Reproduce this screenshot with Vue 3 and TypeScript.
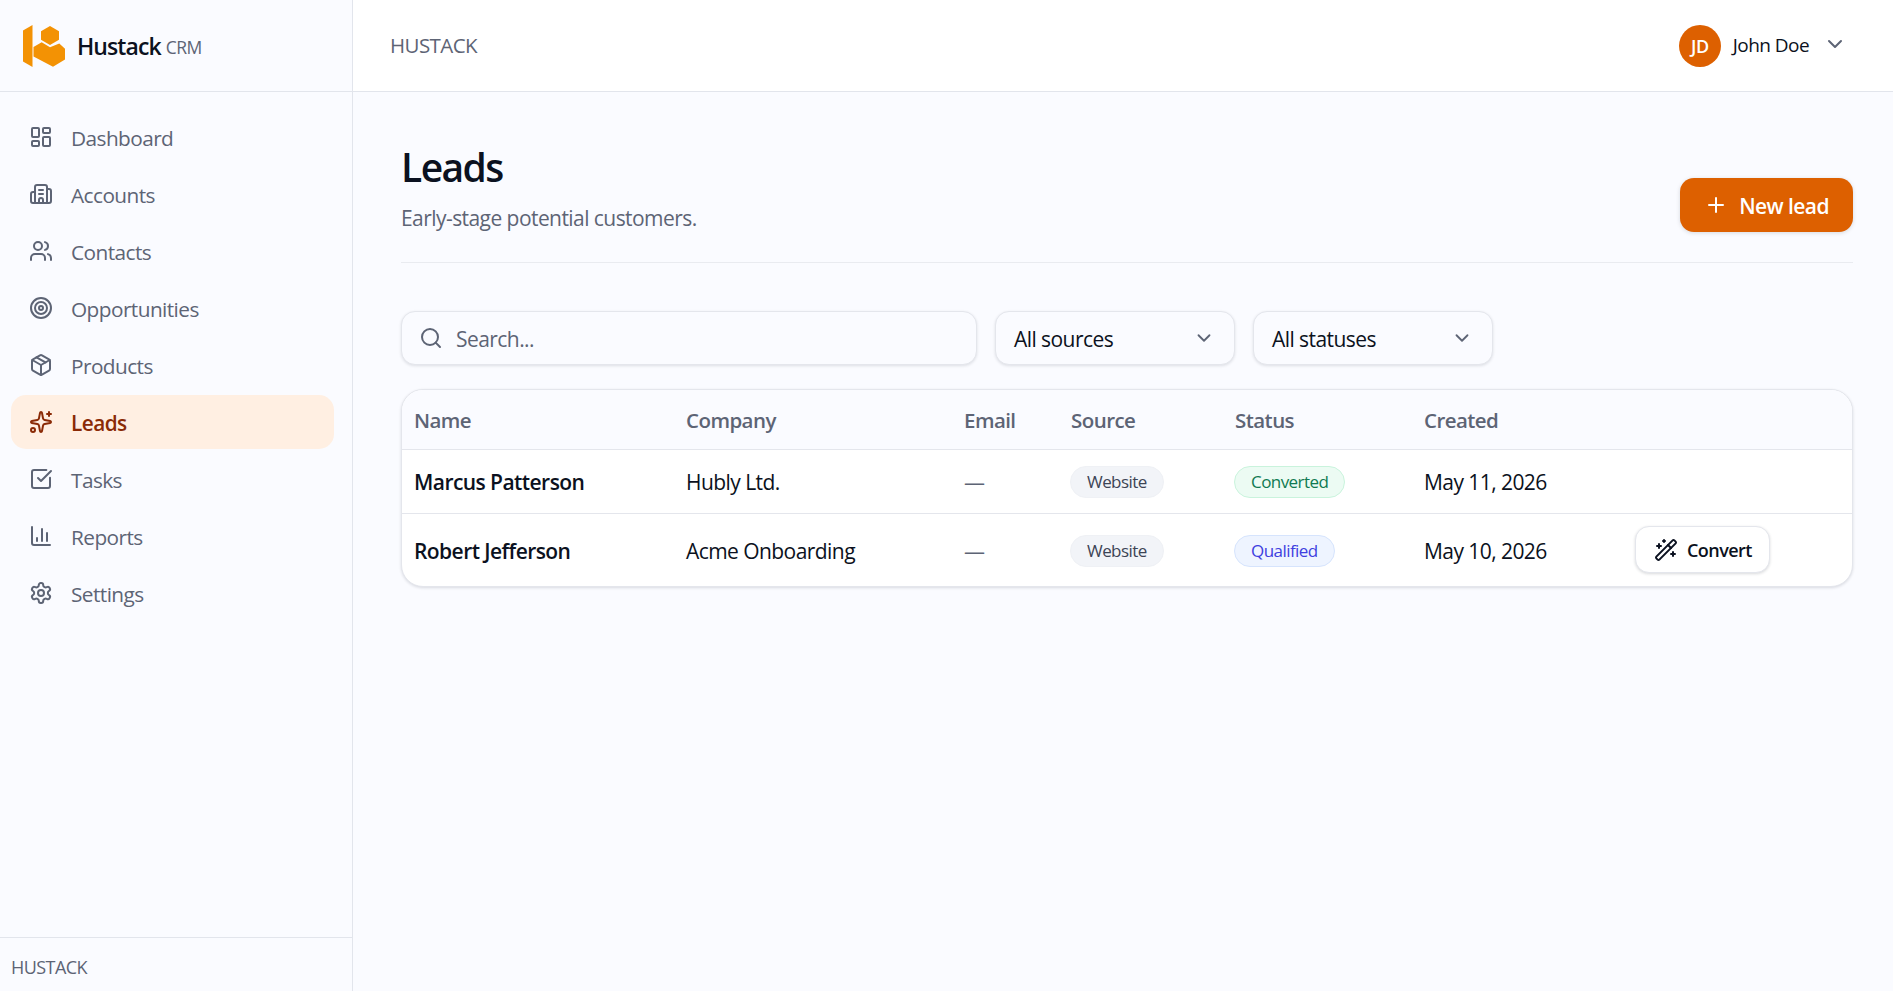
<script setup lang="ts">
// lucide icon bodies, drawn on a 24x24 grid
const icons: Record<string, string> = {
  dashboard: '<rect width="7" height="9" x="3" y="3" rx="1"/><rect width="7" height="5" x="14" y="3" rx="1"/><rect width="7" height="9" x="14" y="12" rx="1"/><rect width="7" height="5" x="3" y="16" rx="1"/>',
  accounts: '<path d="M10 12h4"/><path d="M10 8h4"/><path d="M14 21v-3a2 2 0 0 0-4 0v3"/><path d="M6 10H4a2 2 0 0 0-2 2v7a2 2 0 0 0 2 2h16a2 2 0 0 0 2-2V9a2 2 0 0 0-2-2h-2"/><path d="M6 21V5a2 2 0 0 1 2-2h8a2 2 0 0 1 2 2v16"/>',
  contacts: '<path d="M16 21v-2a4 4 0 0 0-4-4H6a4 4 0 0 0-4 4v2"/><circle cx="9" cy="7" r="4"/><path d="M22 21v-2a4 4 0 0 0-3-3.87"/><path d="M16 3.13a4 4 0 0 1 0 7.75"/>',
  opportunities: '<circle cx="12" cy="12" r="10"/><circle cx="12" cy="12" r="6"/><circle cx="12" cy="12" r="2"/>',
  products: '<path d="M11 21.73a2 2 0 0 0 2 0l7-4A2 2 0 0 0 21 16V8a2 2 0 0 0-1-1.73l-7-4a2 2 0 0 0-2 0l-7 4A2 2 0 0 0 3 8v8a2 2 0 0 0 1 1.73z"/><path d="M12 22V12"/><polyline points="3.29 7 12 12 20.71 7"/><path d="m7.5 4.27 9 5.15"/>',
  leads: '<path d="M11.017 2.814a1 1 0 0 1 1.966 0l1.051 5.558a2 2 0 0 0 1.594 1.594l5.558 1.051a1 1 0 0 1 0 1.966l-5.558 1.051a2 2 0 0 0-1.594 1.594l-1.051 5.558a1 1 0 0 1-1.966 0l-1.051-5.558a2 2 0 0 0-1.594-1.594l-5.558-1.051a1 1 0 0 1 0-1.966l5.558-1.051a2 2 0 0 0 1.594-1.594z"/><path d="M20 2v4"/><path d="M22 4h-4"/><circle cx="4" cy="20" r="2"/>',
  tasks: '<path d="M21 10.656V19a2 2 0 0 1-2 2H5a2 2 0 0 1-2-2V5a2 2 0 0 1 2-2h12.344"/><path d="m9 11 3 3L22 4"/>',
  reports: '<path d="M3 3v16a2 2 0 0 0 2 2h16"/><path d="M18 17V9"/><path d="M13 17V5"/><path d="M8 17v-3"/>',
  settings: '<path d="M12.22 2h-.44a2 2 0 0 0-2 2v.18a2 2 0 0 1-1 1.73l-.43.25a2 2 0 0 1-2 0l-.15-.08a2 2 0 0 0-2.73.73l-.22.38a2 2 0 0 0 .73 2.73l.15.1a2 2 0 0 1 1 1.72v.51a2 2 0 0 1-1 1.74l-.15.09a2 2 0 0 0-.73 2.73l.22.38a2 2 0 0 0 2.73.73l.15-.08a2 2 0 0 1 2 0l.43.25a2 2 0 0 1 1 1.73V20a2 2 0 0 0 2 2h.44a2 2 0 0 0 2-2v-.18a2 2 0 0 1 1-1.73l.43-.25a2 2 0 0 1 2 0l.15.08a2 2 0 0 0 2.73-.73l.22-.39a2 2 0 0 0-.73-2.73l-.15-.08a2 2 0 0 1-1-1.74v-.5a2 2 0 0 1 1-1.74l.15-.09a2 2 0 0 0 .73-2.73l-.22-.38a2 2 0 0 0-2.73-.73l-.15.08a2 2 0 0 1-2 0l-.43-.25a2 2 0 0 1-1-1.73V4a2 2 0 0 0-2-2z"/><circle cx="12" cy="12" r="3"/>',
  wand: '<path d="m21.64 3.64-1.28-1.28a1.21 1.21 0 0 0-1.72 0L2.36 18.64a1.21 1.21 0 0 0 0 1.72l1.28 1.28a1.2 1.2 0 0 0 1.72 0L21.64 5.36a1.2 1.2 0 0 0 0-1.72"/><path d="m14 7 3 3"/><path d="M5 6v4"/><path d="M19 14v4"/><path d="M10 2v2"/><path d="M7 8H3"/><path d="M21 16h-4"/><path d="M11 3H9"/>',
  plus: '<path d="M5 12h14"/><path d="M12 5v14"/>',
  chevron: '<path d="m6 9 6 6 6-6"/>',
  search: '<path d="m21 21-4.34-4.34"/><circle cx="11" cy="11" r="8"/>'
}

const navItems = [
  { label: 'Dashboard', icon: 'dashboard' },
  { label: 'Accounts', icon: 'accounts' },
  { label: 'Contacts', icon: 'contacts' },
  { label: 'Opportunities', icon: 'opportunities' },
  { label: 'Products', icon: 'products' },
  { label: 'Leads', icon: 'leads', active: true },
  { label: 'Tasks', icon: 'tasks' },
  { label: 'Reports', icon: 'reports' },
  { label: 'Settings', icon: 'settings' }
]

const leads = [
  { name: 'Marcus Patterson', company: 'Hubly Ltd.', email: '—', source: 'Website', status: 'Converted', created: 'May 11, 2026', canConvert: false },
  { name: 'Robert Jefferson', company: 'Acme Onboarding', email: '—', source: 'Website', status: 'Qualified', created: 'May 10, 2026', canConvert: true }
]
</script>

<template>
  <div class="app">
    <aside class="sidebar">
      <div class="brand">
        <svg class="logo" viewBox="23 23 42 42">
          <polygon points="23,28.5 32.5,23 32.5,65 23,59.5" />
          <polygon points="50,24 59,29.3 59,37.7 50,43 41,37.7 41,29.3" />
          <polygon points="33.5,45 41.7,40.3 50,45.2 59.3,41.5 65,46.7 65,57.5 53,64.7 33.5,54.5" />
        </svg>
        <span class="brand-name">Hustack</span>
        <span class="brand-sub">CRM</span>
      </div>
      <nav class="nav">
        <a v-for="item in navItems" :key="item.label" :class="['nav-item', { active: item.active }]">
          <svg class="nav-icon" viewBox="0 0 24 24" v-html="icons[item.icon]"></svg>
          <span>{{ item.label }}</span>
        </a>
      </nav>
      <div class="side-foot">HUSTACK</div>
    </aside>

    <div class="main">
      <header class="topbar">
        <span class="crumb">HUSTACK</span>
        <div class="user">
          <span class="avatar">JD</span>
          <span class="user-name">John Doe</span>
          <svg class="user-caret" viewBox="0 0 24 24" v-html="icons.chevron"></svg>
        </div>
      </header>

      <main class="content">
        <div class="page-head">
          <div>
            <h1>Leads</h1>
            <p>Early-stage potential customers.</p>
          </div>
          <button class="btn-primary">
            <svg viewBox="0 0 24 24" v-html="icons.plus"></svg>
            <span>New lead</span>
          </button>
        </div>

        <div class="filters">
          <label class="search">
            <svg viewBox="0 0 24 24" v-html="icons.search"></svg>
            <input placeholder="Search..." />
          </label>
          <div class="select">
            <span>All sources</span>
            <svg viewBox="0 0 24 24" v-html="icons.chevron"></svg>
          </div>
          <div class="select">
            <span>All statuses</span>
            <svg viewBox="0 0 24 24" v-html="icons.chevron"></svg>
          </div>
        </div>

        <div class="table-card">
          <table>
            <colgroup>
              <col style="width: 272px" />
              <col style="width: 278px" />
              <col style="width: 107px" />
              <col style="width: 164px" />
              <col style="width: 189px" />
              <col style="width: 212px" />
              <col />
            </colgroup>
            <thead>
              <tr>
                <th>Name</th>
                <th>Company</th>
                <th>Email</th>
                <th>Source</th>
                <th>Status</th>
                <th>Created</th>
                <th></th>
              </tr>
            </thead>
            <tbody>
              <tr v-for="lead in leads" :key="lead.name">
                <td class="cell-name">{{ lead.name }}</td>
                <td>{{ lead.company }}</td>
                <td class="cell-muted">{{ lead.email }}</td>
                <td><span class="badge neutral">{{ lead.source }}</span></td>
                <td><span :class="['badge', lead.status.toLowerCase()]">{{ lead.status }}</span></td>
                <td>{{ lead.created }}</td>
                <td>
                  <button v-if="lead.canConvert" class="btn-convert">
                    <svg viewBox="0 0 24 24" v-html="icons.wand"></svg>
                    <span>Convert</span>
                  </button>
                </td>
              </tr>
            </tbody>
          </table>
        </div>
      </main>
    </div>
  </div>
</template>

<style>
html, body { margin: 0; background: #fafbff; }
</style>

<style scoped>
.app {
  display: flex;
  height: 991px;
  overflow: hidden;
  font-family: "Open Sans", "Noto Sans", sans-serif;
  letter-spacing: -0.035em;
  color: #0b1120;
  background: #fafbff;
}

svg {
  fill: none;
  stroke: currentColor;
  stroke-width: 2;
  stroke-linecap: round;
  stroke-linejoin: round;
  flex-shrink: 0;
}

/* SIDEBAR */
.sidebar {
  width: 352px;
  flex-shrink: 0;
  display: flex;
  flex-direction: column;
  border-right: 1px solid #e2e5ec;
}
.brand {
  height: 91px;
  flex-shrink: 0;
  display: flex;
  align-items: center;
  padding-left: 23px;
  border-bottom: 1px solid #e2e5ec;
  box-sizing: content-box;
}
.logo { width: 42px; height: 42px; fill: #f39204; stroke: none; }
.brand-name { margin-left: 12px; font-size: 23px; font-weight: 600; letter-spacing: -0.04em; }
.brand-sub { margin-left: 5px; margin-top: 3px; font-size: 17.5px; color: #5d6475; }

.nav {
  flex: 1;
  display: flex;
  flex-direction: column;
  gap: 3px;
  padding: 18px 18px 0 11px;
}
.nav-item {
  display: flex;
  align-items: center;
  gap: 18px;
  height: 54px;
  padding-left: 18px;
  border-radius: 15px;
  font-size: 20.8px;
  color: #5d6475;
}
.nav-item span { margin-top: 1px; }
.nav-item.active { background: #ffefe2; color: #8a2a06; font-weight: 600; }
.nav-icon { width: 24px; height: 24px; margin-top: -1px; }
.side-foot {
  height: 54px;
  padding-left: 11px;
  padding-top: 4px;
  box-sizing: border-box;
  display: flex;
  align-items: center;
  border-top: 1px solid #e2e5ec;
  font-size: 18px;
  color: #5d6475;
}

/* TOPBAR */
.main { flex: 1; min-width: 0; display: flex; flex-direction: column; }
.topbar {
  height: 91px;
  flex-shrink: 0;
  display: flex;
  align-items: center;
  justify-content: space-between;
  padding: 0 46px 0 37px;
  background: #fff;
  border-bottom: 1px solid #e2e5ec;
  box-sizing: content-box;
}
.crumb { font-size: 20.5px; color: #5d6475; margin-top: -2px; }
.user { display: flex; align-items: center; }
.avatar {
  width: 42px;
  height: 42px;
  border-radius: 50%;
  background: #dd6000;
  color: #fff;
  font-size: 18px;
  font-weight: 600;
  display: grid;
  place-items: center;
}
.user-name { margin-left: 12px; font-size: 19px; font-weight: 500; margin-top: -2px; }
.user-caret { width: 24px; height: 24px; margin-left: 14px; color: #5d6475; margin-top: -3px; }

/* PAGE */
.content { padding: 0 40px 0 48px; }
.page-head {
  height: 171px;
  display: flex;
  align-items: flex-end;
  justify-content: space-between;
  padding-bottom: 30px;
  box-sizing: border-box;
  border-bottom: 1px solid #e9ebf0;
}
.page-head h1 { margin: 0; font-size: 39px; line-height: 56px; font-weight: 600; letter-spacing: -0.04em; }
.page-head p { margin: 9px 0 0; font-size: 21px; line-height: 28px; color: #5d6475; }
.btn-primary {
  display: flex;
  align-items: center;
  gap: 11px;
  height: 54px;
  padding: 0 24px;
  border: 0;
  border-radius: 14px;
  background: #dd6000;
  color: #fff;
  font: inherit;
  font-size: 21px;
  font-weight: 600;
  letter-spacing: inherit;
  box-shadow: 0 1px 4px rgba(16, 24, 40, 0.15);
}
.btn-primary span { margin-top: 2px; }
.btn-primary svg { width: 24px; height: 24px; }

.filters { display: flex; gap: 18px; margin-top: 48px; }
.search, .select {
  height: 54px;
  box-sizing: border-box;
  display: flex;
  align-items: center;
  border: 1px solid #e4e6ec;
  border-radius: 14px;
  background: #fafbff;
  box-shadow: 0 1px 3px rgba(16, 24, 40, 0.12);
  font-size: 21px;
}
.search { width: 576px; padding: 1px 0 0 17px; gap: 13px; color: #5d6475; }
.search svg { width: 24px; height: 24px; margin-top: -1px; }
.search input {
  flex: 1;
  min-width: 0;
  border: 0;
  outline: 0;
  padding: 0;
  background: transparent;
  font: inherit;
  letter-spacing: inherit;
}
.search input::placeholder { color: #5d6475; opacity: 1; }
.select { width: 240px; padding: 1px 19px 0 18px; justify-content: space-between; }
.select svg { width: 22px; height: 22px; color: #5d6475; margin-top: -2px; }

.table-card {
  margin-top: 24px;
  border: 1px solid #e4e6ec;
  border-radius: 22px;
  overflow: hidden;
  background: #fff;
  box-shadow: 0 1px 3px rgba(16, 24, 40, 0.14);
}
table { width: 100%; border-collapse: collapse; table-layout: fixed; }
th {
  height: 58px;
  padding: 1px 12px 0;
  text-align: left;
  font-size: 20.5px;
  font-weight: 600;
  color: #5d6475;
  background: #fafbff;
  border-bottom: 1px solid #e4e6ec;
}
td { height: 63px; padding: 0 12px; font-size: 21px; white-space: nowrap; }
tbody tr + tr td { border-top: 1px solid #e4e6ec; height: 71px; padding-top: 1px; }
.cell-name { font-weight: 600; }
.cell-muted { color: #5d6475; }

.badge {
  display: inline-block;
  margin-left: -1px;
  padding: 0 16px;
  height: 32px;
  line-height: 30px;
  box-sizing: border-box;
  border: 1px solid transparent;
  border-radius: 16px;
  font-size: 17px;
  font-weight: 500;
  vertical-align: middle;
}
.badge.neutral { background: #f2f4f8; border-color: #eff1f5; color: #3d4455; }
.badge.converted { background: #ecfbf3; border-color: #c9f3dc; color: #107a52; }
.badge.qualified { background: #eef4ff; border-color: #d6e4fd; color: #3f3fe0; }

.btn-convert {
  display: flex;
  align-items: center;
  gap: 9px;
  width: 135px;
  height: 47px;
  margin: -2px 0 0 -1px;
  padding: 0 0 0 18px;
  box-sizing: border-box;
  border: 1px solid #e4e6ec;
  border-radius: 14px;
  background: #fff;
  box-shadow: 0 1px 3px rgba(16, 24, 40, 0.16);
  color: #0b1120;
  font: inherit;
  font-size: 18px;
  font-weight: 600;
  letter-spacing: inherit;
}
.btn-convert svg { width: 24px; height: 24px; }
</style>
